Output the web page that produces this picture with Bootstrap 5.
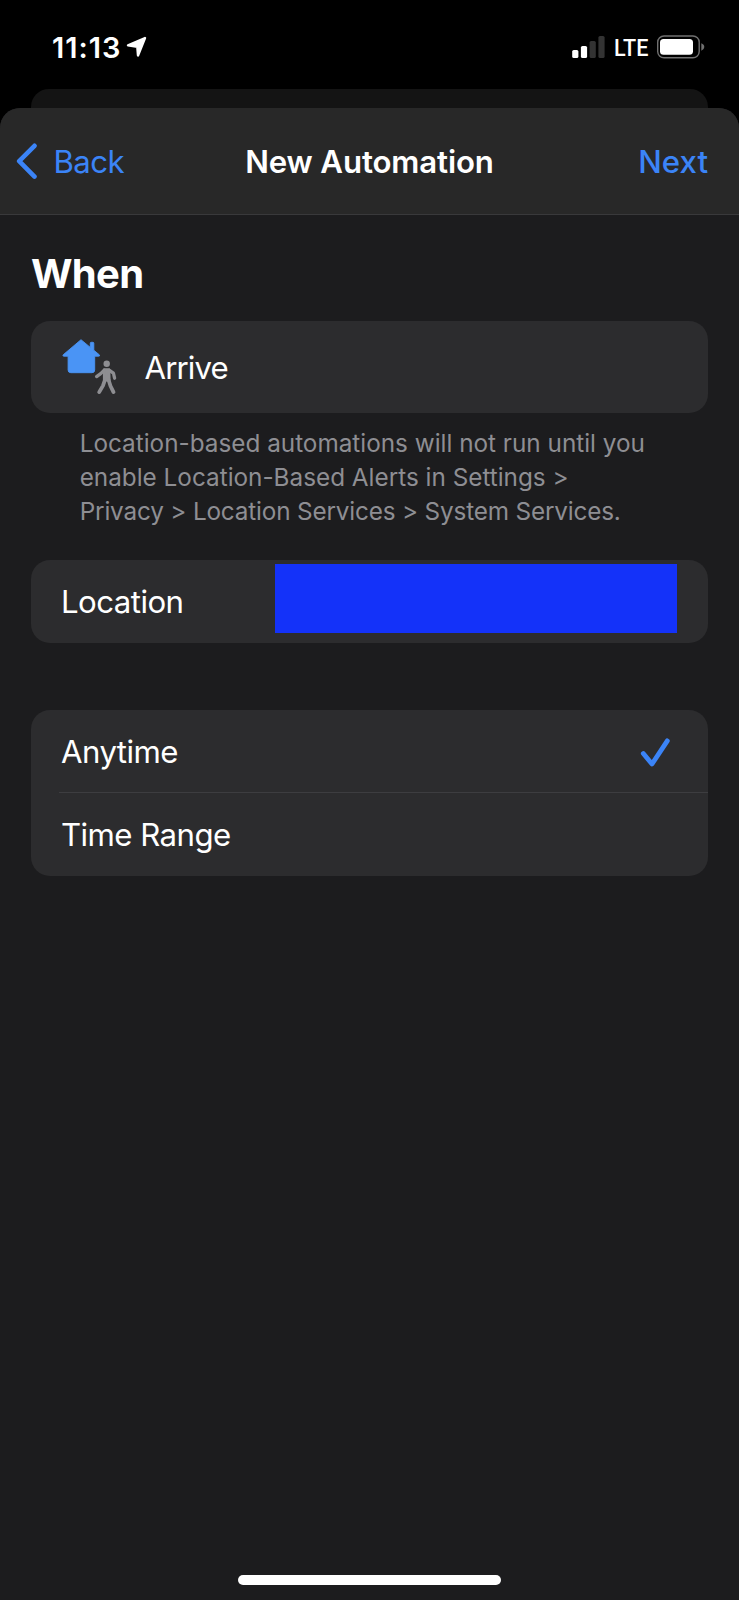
<!DOCTYPE html>
<html lang="en" data-bs-theme="dark">
<head>
<meta charset="utf-8">
<meta name="viewport" content="width=device-width, initial-scale=1">
<title>New Automation</title>
<link href="https://cdn.jsdelivr.net/npm/bootstrap@5.3.0/dist/css/bootstrap.min.css" rel="stylesheet">
<style>
  body { background: #000; color: #fff; font-family: Inter, "Liberation Sans", sans-serif; font-size: 31.2px; line-height: 1.2; }
  svg { display: block; flex: none; }
  .phone { height: 1600px; overflow: hidden; }
  .status-bar { height: 89px; padding: 5px 34px 0 51px; }
  .clock { font-size: 29px; font-weight: 600; letter-spacing: 1px; line-height: 84px; width: 75px; padding: 1px 0 0 1px; }
  .carrier { font-family: Roboto, sans-serif; font-size: 23.7px; font-weight: 500; line-height: 84px; width: 43px; transform: scaleX(.91); transform-origin: 0 50%; margin-left: 9px; margin-right: -1px; padding-top: 2px; }
  .sheet-behind { height: 19px; margin: 0 31px; background: #141414; border-radius: 18px 18px 0 0; }
  .sheet-corners { background: linear-gradient(90deg, #000 31px, #141414 31px, #141414 708px, #000 708px) top / 100% 20px no-repeat; }
  .sheet { background: #1c1c1e; border-radius: 20px 20px 0 0; overflow: hidden; }
  .sheet-nav { height: 107px; background: #282828; border-bottom: 1px solid #39393b; padding: 0 31px 0 16px; }
  .nav-text { padding-top: 3px; }
  .accent { color: #3b84f7; }
  .back-label { margin-left: 15.5px; letter-spacing: -.58px; }
  .nav-title { font-weight: 600; letter-spacing: -.13px; padding-left: 15px; }
  .next-label { font-weight: 500; }
  .sheet-body { padding: 0 31px; }
  .section-title { font-size: 40px; font-weight: 700; letter-spacing: -.7px; line-height: 48px; margin: 35px 0 23px 0; }
  .cell-group { background: #2c2c2e; border-radius: 19px; }
  .cell { height: 83px; padding: 2px 31px 0 30px; letter-spacing: -.55px; }
  .arrive-cell { height: 92px; }
  .arrive-cell svg { margin: -3px 0 0 1px; }
  .arrive-label { letter-spacing: -.89px; margin-left: 26.5px; padding-top: 1px; }
  .footnote { color: #8e8e93; font-size: 24.3px; line-height: 34.2px; margin: 13px 0 31px; padding-left: 48.7px; height: 103px; white-space: nowrap; }
  .footnote .tight { letter-spacing: -.17px; }
  .redaction { background: #1432f9; width: 402px; height: 69px; margin-top: -8px; }
  .options { margin-top: 67px; }
  .divider { height: 1px; background: #3d3d40; margin: -1px 0 0 28px; }
  .sheet-foot { padding-bottom: 15px; }
  .home-bar { width: 263px; height: 10px; border-radius: 5px; background: #fff; }
</style>
</head>
<body>
<div class="phone d-flex flex-column">
  <div class="status-bar d-flex align-items-center">
    <span class="clock">11:13</span>
    <svg width="22" height="22" viewBox="126 36 22 22"><path d="M145 38 128 45.3 137.3 46.7 138 55.5Z" fill="#fff" stroke="#fff" stroke-width="2.4" stroke-linejoin="round"/></svg>
    <svg class="ms-auto" width="33" height="24" viewBox="572.5 35 33 24">
      <rect x="572.7" y="50" width="6.2" height="8" rx="1.6" fill="#fff"/>
      <rect x="581.4" y="46" width="6.2" height="12" rx="1.6" fill="#fff"/>
      <rect x="590.1" y="41" width="6.2" height="17" rx="1.6" fill="#333"/>
      <rect x="598.9" y="36" width="6.2" height="22" rx="1.6" fill="#333"/>
    </svg>
    <span class="carrier">LTE</span>
    <svg width="49" height="24" viewBox="656 35 49 24">
      <rect x="657.7" y="36" width="41.5" height="21.8" rx="6.3" fill="none" stroke="#707070" stroke-width="1.4"/>
      <rect x="660" y="39" width="33" height="15.8" rx="3.6" fill="#fff"/>
      <path d="M701.3 43.3Q704.3 44.4 704.3 47T701.3 50.7Z" fill="#707070"/>
    </svg>
  </div>
  <div class="sheet-behind"></div>
  <div class="sheet-corners flex-grow-1 d-flex flex-column">
    <main class="sheet flex-grow-1 d-flex flex-column">
      <header class="sheet-nav row g-0 align-items-center">
        <div class="col d-flex align-items-center accent">
          <svg width="22" height="38" viewBox="17 142 22 38"><path d="M35.5 145.8 20.2 161.2 35.5 176.6" fill="none" stroke="currentColor" stroke-width="4.6" stroke-linecap="round" stroke-linejoin="round"/></svg>
          <span class="back-label nav-text">Back</span>
        </div>
        <div class="col-auto nav-title nav-text">New Automation</div>
        <div class="col text-end accent next-label nav-text">Next</div>
      </header>
      <div class="sheet-body flex-grow-1">
        <h1 class="section-title">When</h1>
        <div class="cell-group">
          <div class="cell arrive-cell d-flex align-items-center">
            <svg width="56" height="60" viewBox="62 337 56 60">
              <path d="M81 339.7 90.3 347.4V343.2Q90.3 342.3 91.3 342.3H92.9Q93.8 342.3 93.8 343.2V350.2L99.3 354.8Q100.3 356.2 98.6 356.2H94.7V370Q94.7 372.7 92 372.7H70.8Q68.1 372.7 68.1 370V356.2H64Q62.2 356.2 63.2 354.8Z" fill="#4a94f5" stroke="#4a94f5" stroke-width=".9" stroke-linejoin="round"/>
              <g fill="none" stroke="#8e8e92" stroke-linecap="round" stroke-linejoin="round">
                <circle cx="106.7" cy="363.7" r="3.2" fill="#8e8e92" stroke="none"/>
                <path d="M104.3 369.6H108.9L109.2 380H104.3Z" fill="#8e8e92" stroke-width="2.8"/>
                <path d="M104.2 370.3 100.7 373.6 96.6 376.6M109.4 370.3 113.4 373.2 114.6 378.2" stroke-width="3.3"/>
                <path d="M104.9 380 103 385.6 99.2 392.1M108.6 380 110.5 386 113.5 392.1" stroke-width="3.8"/>
              </g>
            </svg>
            <span class="arrive-label">Arrive</span>
          </div>
        </div>
        <p class="footnote">Location-based automations will not run until you<br>enable Location-Based Alerts in Settings &gt;<br><span class="tight">Privacy &gt; Location Services &gt; System Services.</span></p>
        <div class="cell-group">
          <div class="cell d-flex align-items-center justify-content-between">
            <span>Location</span>
            <div class="redaction"></div>
          </div>
        </div>
        <div class="cell-group options">
          <div class="cell d-flex align-items-center justify-content-between">
            <span>Anytime</span>
            <svg class="accent me-1" width="34" height="32" viewBox="639 736.5 34 32"><path d="M643.3 753 652 763.5 667.3 740.4" fill="none" stroke="currentColor" stroke-width="4.8" stroke-linecap="round" stroke-linejoin="round"/></svg>
          </div>
          <div class="divider"></div>
          <div class="cell d-flex align-items-center"><span>Time Range</span></div>
        </div>
      </div>
      <footer class="sheet-foot d-flex justify-content-center"><div class="home-bar"></div></footer>
    </main>
  </div>
</div>
<script src="https://cdn.jsdelivr.net/npm/bootstrap@5.3.0/dist/js/bootstrap.bundle.min.js"></script>
</body>
</html>
